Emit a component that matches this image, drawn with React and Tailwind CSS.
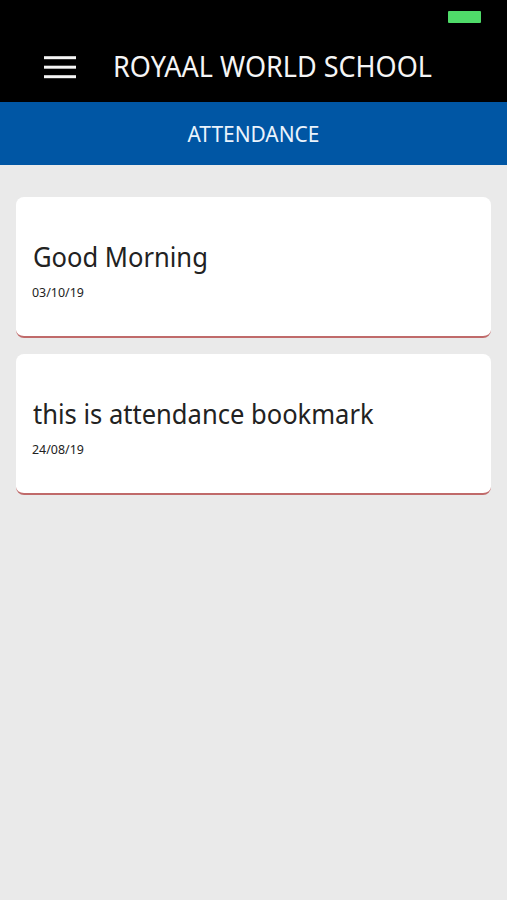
const bookmarks = [
  { title: "Good Morning", date: "03/10/19" },
  { title: "this is attendance bookmark", date: "24/08/19" },
];

function MenuIcon() {
  return (
    <svg width="32" height="24" viewBox="0 0 32 24" fill="#f5f5f5">
      <rect y="1.2" width="32" height="3" />
      <rect y="10.7" width="32" height="3" />
      <rect y="20.2" width="32" height="3" />
    </svg>
  );
}

function BookmarkCard({ title, date }) {
  return (
    <div className="h-[141px] rounded-lg border-b-2 border-[#c06a6a] bg-white px-4 pt-[41px]">
      <h2 className="ml-px w-max origin-left scale-x-[0.912] text-[28px] leading-9 whitespace-nowrap">
        {title}
      </h2>
      <p className="mt-2.5 w-max origin-left scale-x-[0.955] text-[13px] leading-4">{date}</p>
    </div>
  );
}

export default function App() {
  return (
    <div className="flex h-[900px] w-[507px] flex-col bg-[#eaeaea] font-['Noto_Sans','Open_Sans',sans-serif] text-[#222]">
      <div className="flex h-[34px] justify-end bg-black pt-[11px] pr-[26px]">
        <span className="h-3 w-[33px] rounded-[1px] bg-[#4fdb69]" />
      </div>
      <header className="flex h-[68px] items-center bg-black pb-0.5 pl-11 text-[#f5f5f5]">
        <button>
          <MenuIcon />
        </button>
        <h1 className="mb-0.5 ml-[37px] w-max origin-left scale-x-[0.948] text-[28.5px] whitespace-nowrap">
          ROYAAL WORLD SCHOOL
        </h1>
      </header>
      <div className="flex h-[63px] items-center justify-center bg-[#0056a4] text-[22px] text-[#eaf3fc]">
        <span className="scale-x-95">ATTENDANCE</span>
      </div>
      <main className="flex flex-col gap-4 px-4 pt-8">
        {bookmarks.map((item) => (
          <BookmarkCard key={item.date} title={item.title} date={item.date} />
        ))}
      </main>
    </div>
  );
}
